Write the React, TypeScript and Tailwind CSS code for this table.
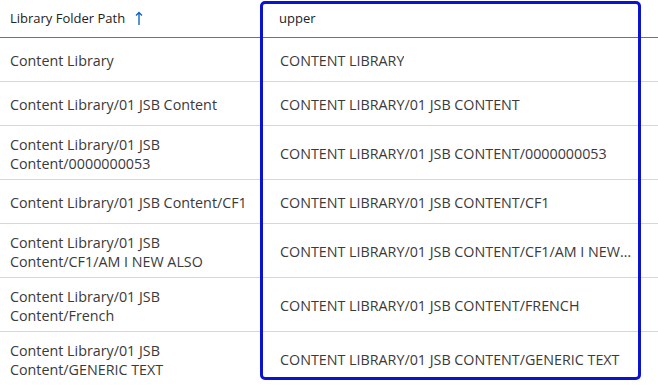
const rows: [string, string][] = [
  ['Content Library', 'CONTENT LIBRARY'],
  ['Content Library/01 JSB Content', 'CONTENT LIBRARY/01 JSB CONTENT'],
  ['Content Library/01 JSB Content/0000000053', 'CONTENT LIBRARY/01 JSB CONTENT/0000000053'],
  ['Content Library/01 JSB Content/CF1', 'CONTENT LIBRARY/01 JSB CONTENT/CF1'],
  ['Content Library/01 JSB Content/CF1/AM I NEW ALSO', 'CONTENT LIBRARY/01 JSB CONTENT/CF1/AM I NEW ALSO'],
  ['Content Library/01 JSB Content/French', 'CONTENT LIBRARY/01 JSB CONTENT/FRENCH'],
  ['Content Library/01 JSB Content/GENERIC TEXT', 'CONTENT LIBRARY/01 JSB CONTENT/GENERIC TEXT'],
];

export default function App() {
  return (
    <div
      className="relative w-[658px] h-[385px] overflow-hidden bg-white text-[#3a3a3a]"
      style={{ fontFamily: '"Open Sans", sans-serif' }}
    >
      {/* Header */}
      <div className="flex h-[38px] border-b border-[#6b7280] text-[13px] text-[#222]">
        <div className="w-[260px] shrink-0 flex items-center pl-[10px] gap-[10px]">
          <span>Library Folder Path</span>
          <svg width="8" height="15" viewBox="0 0 8 15" fill="none" stroke="#1565c0" strokeWidth="1.4">
            <path d="M4 14V1.5M1 4.5L4 1.5L7 4.5" />
          </svg>
        </div>
        <div className="flex-1 flex items-center pl-[19px]">upper</div>
      </div>

      {/* Rows */}
      {rows.map(([path, upper], i) => (
        <div key={i} className="flex min-h-[44px] border-b border-[#d4d8dd] text-[14.3px] leading-[18.5px]">
          <div className="w-[260px] shrink-0 flex items-center pl-[10px] pr-[10px] pt-[10px] pb-[6px]">
            {path}
          </div>
          <div className="flex-1 min-w-0 flex items-center pl-[20px] pr-[24px] pt-[10px] pb-[6px]">
            <span className="truncate">{upper}</span>
          </div>
        </div>
      ))}

      {/* Selected column outline */}
      <div className="absolute left-[260px] top-[1px] w-[381px] h-[379px] border-[3px] border-[#0a14d0] rounded-[5px] pointer-events-none" />
    </div>
  );
}
